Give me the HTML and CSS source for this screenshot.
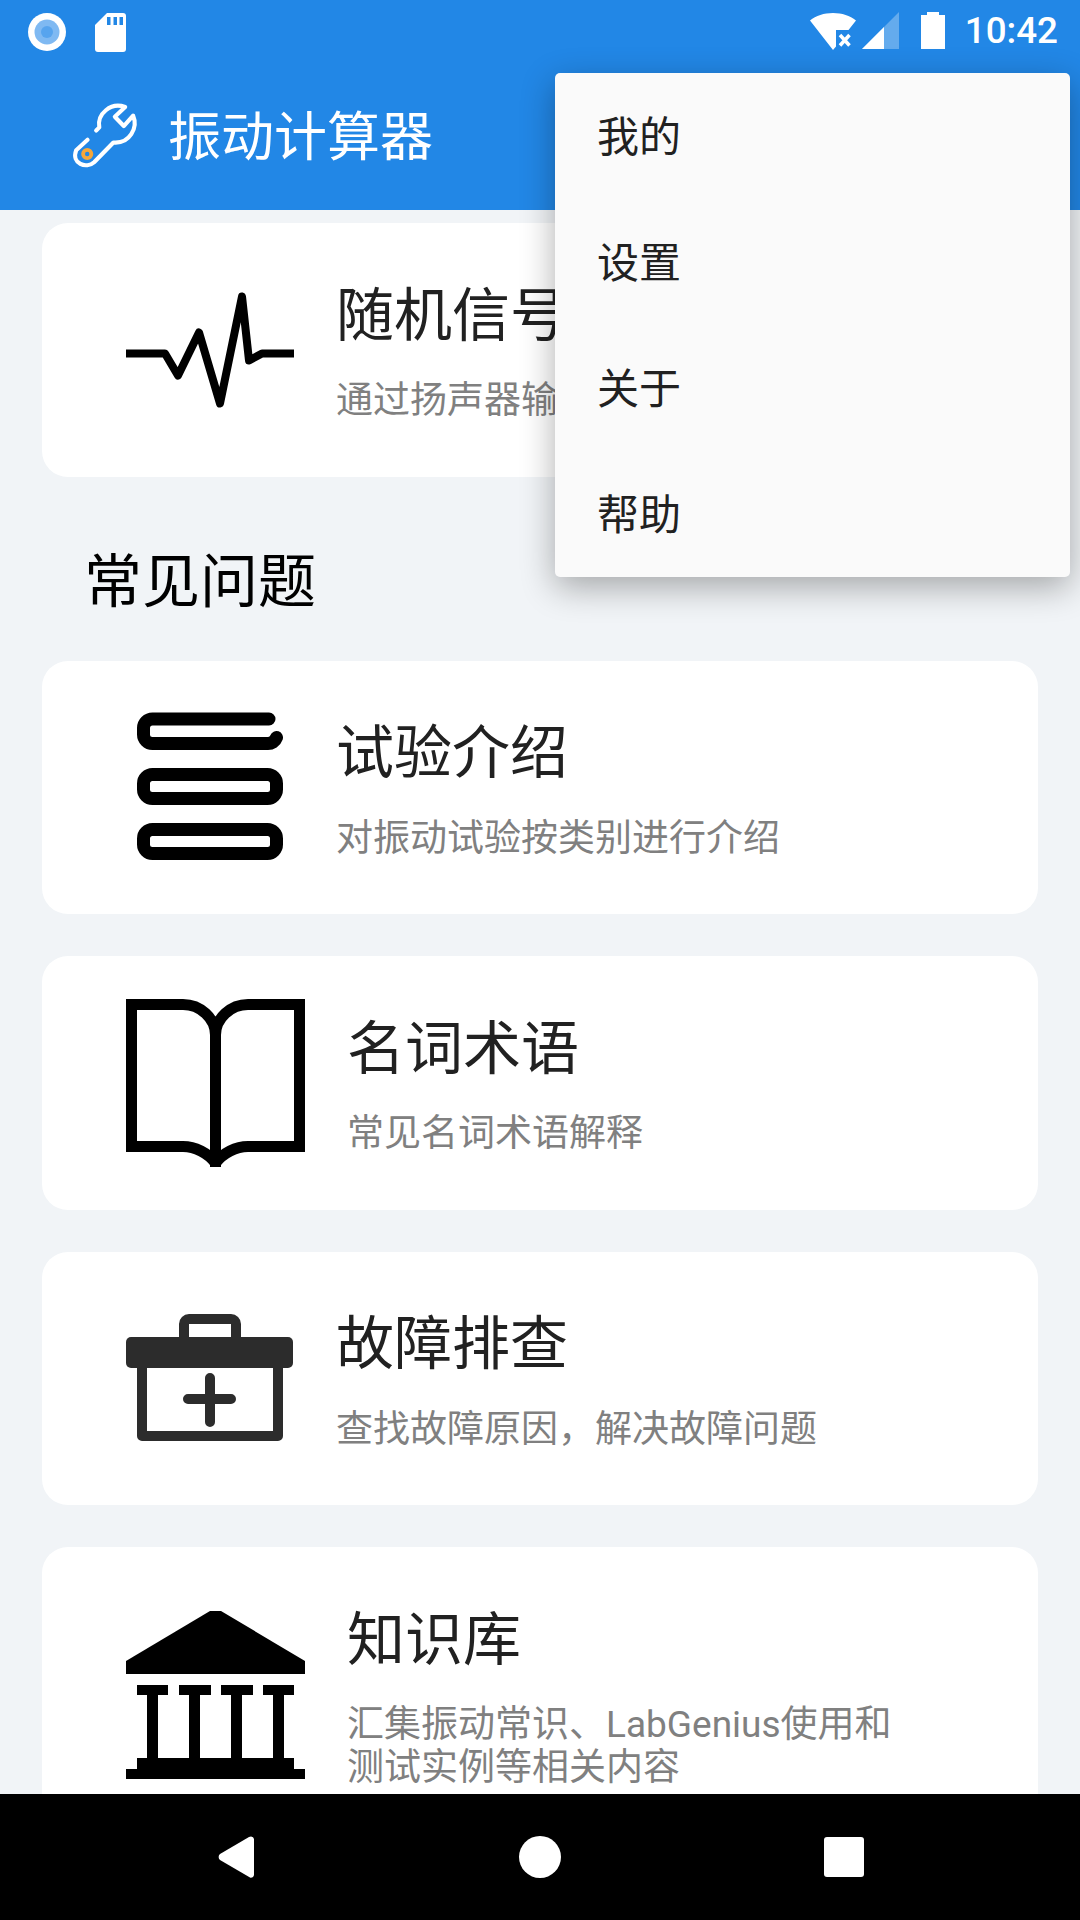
FILE: index.html
```html
<!DOCTYPE html>
<html lang="zh-CN">
<head>
    <meta charset="UTF-8">
    <meta name="viewport" content="width=device-width, initial-scale=1.0">
    <title>振动计算器</title>
    <link rel="stylesheet" href="styles.css">
</head>
<body>
    <div class="screen">
        <header class="app-header">
            <!-- Status bar -->
            <div class="status-bar">
                <div class="status-left">
                    <svg class="status-dot" viewBox="0 0 38 38">
                        <circle cx="19" cy="19" r="19" fill="#fff"/>
                        <circle cx="19" cy="19" r="12.5" fill="#7fb9f2"/>
                        <circle cx="19" cy="19" r="6" fill="#57a4ee"/>
                    </svg>
                    <svg class="status-sd" viewBox="0 0 31 39">
                        <path fill="#fff" d="M12 0H28a3 3 0 0 1 3 3V36a3 3 0 0 1-3 3H3a3 3 0 0 1-3-3V12Z"/>
                        <path fill="#2287e6" d="M12 4h3.500v8H12ZM18.500 4H22v8h-3.500ZM24.500 4H28v8h-3.500Z"/>
                    </svg>
                </div>
                <div class="status-right">
                    <svg class="status-wifi" viewBox="0 0 46 37">
                        <path fill="#fff" d="M0 7.500C6 2.700 14 0 23 0s17 2.700 23 7.500L38.500 17H26V33.500L23 37Z"/>
                        <path fill="none" stroke="#fff" stroke-width="3.500" d="M30 22l9.500 10.500M39.500 22L30 32.500"/>
                    </svg>
                    <svg class="status-signal" viewBox="0 0 37 37">
                        <path fill="#fff" fill-opacity="0.3" d="M37 0V37H0Z"/>
                        <path fill="#fff" d="M22 15V37H0Z"/>
                    </svg>
                    <svg class="status-battery" viewBox="0 0 24 37">
                        <path fill="#fff" d="M6 0H18V3H24V37H0V3H6Z"/>
                    </svg>
                    <span class="status-time">10:42</span>
                </div>
            </div>

            <!-- Toolbar -->
            <div class="toolbar">
                <svg class="toolbar-logo" viewBox="205 305 200 205">
                    <path fill="none" stroke="#fff" stroke-width="12" stroke-linecap="round" stroke-linejoin="round" d="M278 393L287 384C280 345 320 310 362 325L332 353L358 380L385 350C400 385 375 432 328 428L272 485C250 505 205 490 220 450L253 420"/>
                    <circle cx="252" cy="461" r="12" fill="#2287e6" stroke="#f5a73b" stroke-width="11"/>
                </svg>
                <h1 class="toolbar-title">振动计算器</h1>
            </div>
        </header>

        <main class="content">
            <div class="card">
                <svg class="card-icon" viewBox="0 0 168 168">
                    <path fill="none" stroke="#000" stroke-width="8" stroke-linecap="round" stroke-linejoin="round" d="M1 87.500H39L52 109.500L73 66.500L94 137.500L116 30.500L123 94.500L136 87.500H167"/>
                </svg>
                <div class="card-text">
                    <h3>随机信号</h3>
                    <p>通过扬声器输出</p>
                </div>
            </div>

            <h2 class="section-title">常见问题</h2>

            <div class="card">
                <svg class="card-icon" viewBox="0 0 168 168">
                    <g fill="none" stroke="#000" stroke-width="13" stroke-linecap="round" stroke-linejoin="round">
                        <path d="M143 16H26.500A9 9 0 0 0 17.500 25V31.500A9 9 0 0 0 26.500 40.500H141.500A9 9 0 0 0 150.500 34.500"/>
                        <rect x="17.500" y="71.500" width="133" height="24" rx="9"/>
                        <rect x="17.500" y="126.500" width="133" height="24" rx="9"/>
                    </g>
                </svg>
                <div class="card-text">
                    <h3>试验介绍</h3>
                    <p>对振动试验按类别进行介绍</p>
                </div>
            </div>

            <div class="card">
                <svg class="card-icon wide" viewBox="0 0 179 168">
                    <path fill="none" stroke="#000" stroke-width="11" d="M89.500 168V36C89.500 19 74 5.500 57 5.500H5.500V147.500H57C69 147.500 82 154 89.500 164C97 154 110 147.500 122 147.500H173.500V5.500H122C105 5.500 89.500 19 89.500 36"/>
                </svg>
                <div class="card-text">
                    <h3>名词术语</h3>
                    <p>常见名词术语解释</p>
                </div>
            </div>

            <div class="card">
                <svg class="card-icon" viewBox="0 0 168 168">
                    <g fill="none" stroke="#2c2c2c" stroke-width="10" stroke-linejoin="round">
                        <path d="M58 43V30a5 5 0 0 1 5-5H105a5 5 0 0 1 5 5V43"/>
                        <path d="M16 70V142H152V70"/>
                        <path stroke-linecap="round" d="M62 105H105M84 84V128"/>
                    </g>
                    <rect x="0" y="43" width="167" height="31" rx="5" fill="#2c2c2c"/>
                </svg>
                <div class="card-text">
                    <h3>故障排查</h3>
                    <p>查找故障原因，解决故障问题</p>
                </div>
            </div>

            <div class="card">
                <svg class="card-icon wide" viewBox="0 0 179 168">
                    <path fill="#000" d="M84 0H95L179 50V63H0V50Z"/>
                    <g fill="#000">
                        <rect x="11" y="74" width="31" height="10"/>
                        <rect x="53" y="74" width="32" height="10"/>
                        <rect x="95" y="74" width="32" height="10"/>
                        <rect x="137" y="74" width="31" height="10"/>
                        <rect x="21" y="84" width="11" height="64"/>
                        <rect x="63" y="84" width="11" height="64"/>
                        <rect x="105" y="84" width="11" height="64"/>
                        <rect x="147" y="84" width="11" height="64"/>
                        <rect x="11" y="147" width="157" height="11"/>
                        <rect x="0" y="158" width="179" height="10"/>
                    </g>
                </svg>
                <div class="card-text">
                    <h3>知识库</h3>
                    <p>汇集振动常识、LabGenius使用和<br>测试实例等相关内容</p>
                </div>
            </div>
        </main>

        <!-- Android nav bar -->
        <nav class="nav-bar">
            <svg class="nav-back" viewBox="0 0 36 42">
                <path fill="#fff" d="M33 0.500a3 3 0 0 1 3 2.500V39a3 3 0 0 1-4 2.500L2 24a4 4 0 0 1 0-6L31 1Z"/>
            </svg>
            <span class="nav-home"></span>
            <span class="nav-recent"></span>
        </nav>

        <!-- Overflow menu -->
        <ul class="popup-menu">
            <li>我的</li>
            <li>设置</li>
            <li>关于</li>
            <li>帮助</li>
        </ul>
    </div>
</body>
</html>
```

FILE: styles.css
```css
* {
    box-sizing: border-box;
}

body {
    margin: 0;
    font-family: Roboto, 'Noto Sans CJK SC', sans-serif;
    background-color: #f1f4f7;
}

.screen {
    position: relative;
    width: 1080px;
    height: 1920px;
    display: flex;
    flex-direction: column;
    overflow: hidden;
}

/* Header */
.app-header {
    background-color: #2287e6;
    color: #fff;
    flex: none;
}

.status-bar {
    height: 63px;
    display: flex;
    justify-content: space-between;
    padding: 12px 22px 0 28px;
}

.status-left {
    display: flex;
    gap: 29px;
    align-items: flex-start;
}

.status-dot {
    width: 38px;
    height: 38px;
    margin-top: 1px;
}

.status-sd {
    width: 31px;
    height: 39px;
    margin-top: 1px;
}

.status-right {
    display: flex;
    align-items: flex-start;
}

.status-wifi {
    width: 46px;
    height: 37px;
    margin-top: 1px;
}

.status-signal {
    width: 37px;
    height: 37px;
    margin-left: 6px;
}

.status-battery {
    width: 24px;
    height: 37px;
    margin-left: 22px;
}

.status-time {
    font-family: Roboto, sans-serif;
    font-size: 36.75px;
    font-weight: 500;
    line-height: 37px;
    margin-left: 20px;
}

.toolbar {
    height: 147px;
    display: flex;
    align-items: center;
    padding-left: 71px;
}

.toolbar-logo {
    width: 69px;
    height: 71px;
    margin-bottom: 2px;
}

.toolbar-title {
    margin: 2px 0 0 28px;
    font-size: 53px;
    font-weight: 400;
    line-height: 72px;
}

/* Content */
.content {
    flex: 1;
    min-height: 0;
    overflow: hidden;
    padding: 13px 42px 0;
}

.card {
    display: flex;
    align-items: center;
    gap: 42px;
    padding: 42px 84px;
    margin-bottom: 42px;
    background-color: #fff;
    border-radius: 26px;
}

.card-icon {
    flex: none;
    width: 168px;
    height: 168px;
}

.card-icon.wide {
    width: 179px;
}

.card-text {
    padding: 15.75px 0 12.25px;
}

.card-text h3 {
    margin: 0 0 27.5px;
    font-size: 58px;
    font-weight: 400;
    line-height: 71px;
    color: #212121;
}

.card-text p {
    margin: 0;
    font-size: 37px;
    line-height: 43px;
    color: #808080;
}

.section-title {
    margin: 63px 0 37px 42px;
    font-size: 58px;
    font-weight: 400;
    line-height: 84px;
    color: #000;
}

/* Nav bar */
.nav-bar {
    flex: none;
    height: 126px;
    background-color: #000;
    position: relative;
    display: grid;
    grid-template-columns: 218px 36px 265px 42px 263px 40px;
    align-items: center;
}

.nav-back {
    grid-column: 2;
    width: 36px;
    height: 42px;
}

.nav-home {
    grid-column: 4;
    width: 42px;
    height: 42px;
    border-radius: 50%;
    background-color: #fff;
}

.nav-recent {
    grid-column: 6;
    width: 40px;
    height: 40px;
    border-radius: 3px;
    background-color: #fff;
}

/* Popup menu */
.popup-menu {
    position: absolute;
    top: 73px;
    left: 555px;
    width: 515px;
    margin: 0;
    padding: 0;
    list-style: none;
    background-color: #fafafa;
    border-radius: 5px;
    box-shadow: 0 10px 34px rgba(0, 0, 0, 0.32);
}

.popup-menu li {
    height: 126px;
    display: flex;
    align-items: center;
    padding: 0 0 5px 42px;
    font-size: 42px;
    color: #212121;
}
```
